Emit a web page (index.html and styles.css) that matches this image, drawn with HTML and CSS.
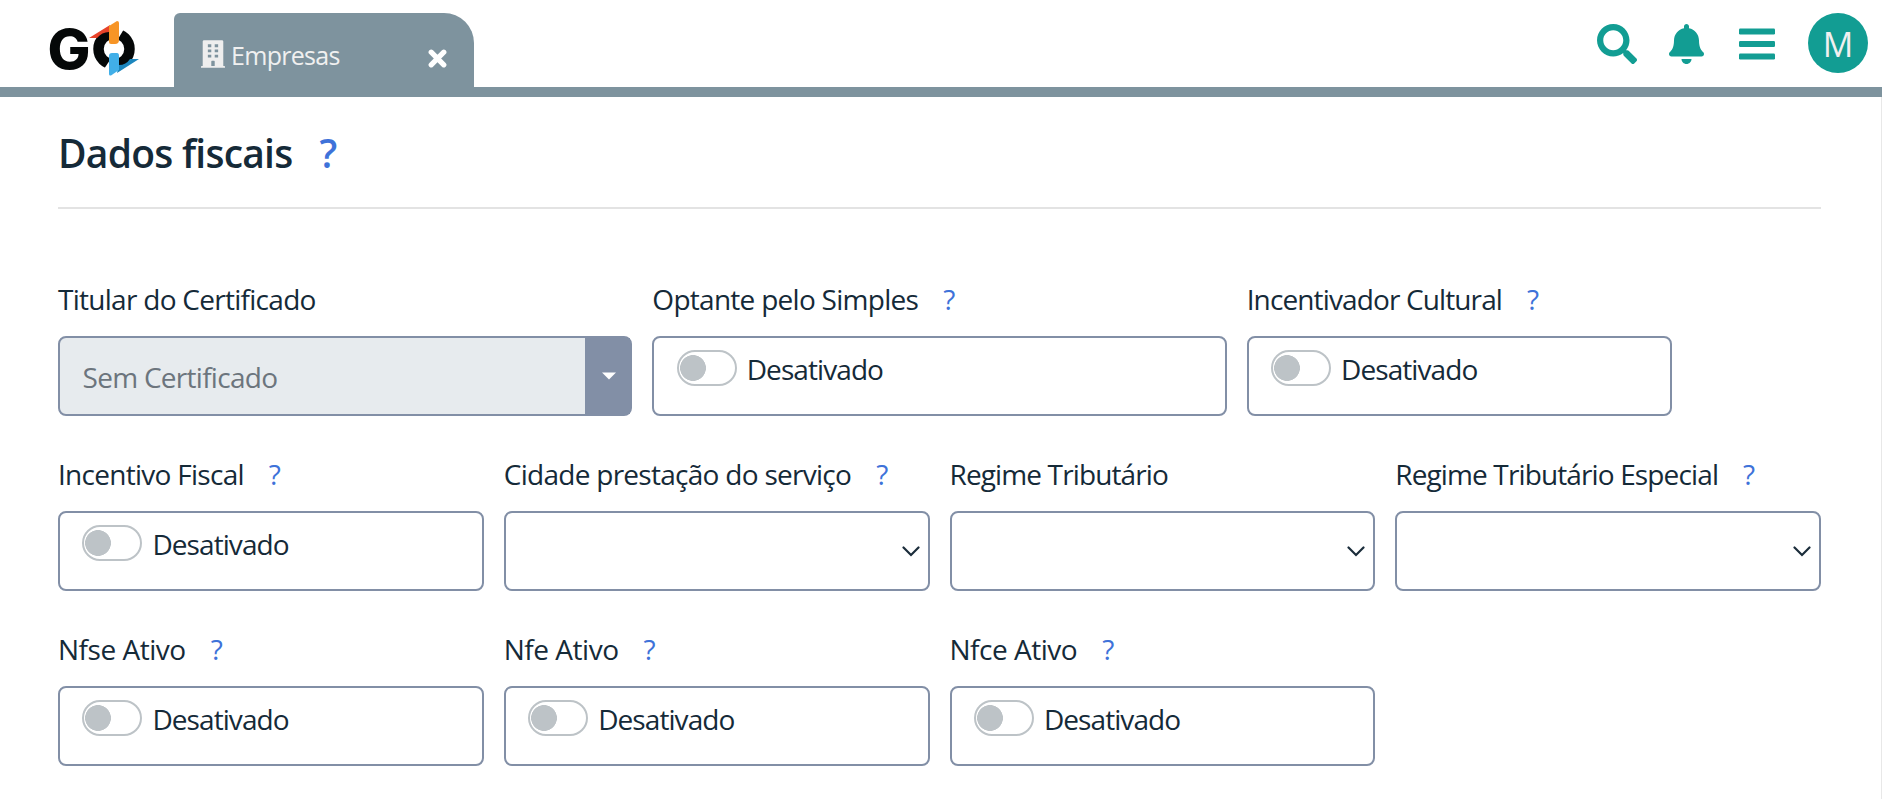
FILE: index.html
```html
<!DOCTYPE html>
<html lang="pt-BR">
<head>
<meta charset="utf-8">
<title>Empresas</title>
<link rel="stylesheet" href="styles.css">
</head>
<body>
<header class="topbar">
  <svg class="logo" width="98" height="76" viewBox="-6 -8 98 76" role="img" aria-label="GO">
    <text class="logo-letter" x="-1.500" y="49" textLength="43" lengthAdjust="spacingAndGlyphs">G</text>
    <ellipse cx="65" cy="29" rx="15.500" ry="15.500" fill="none" stroke="#050808" stroke-width="10.500"/>
    <path d="M69 1 75 9 69 19z" fill="#fff"/>
    <path d="M61 57 55 49 61 40z" fill="#fff"/>
    <path d="M40 18 61 5 60 12Q53 12 48 18z" fill="#e8432a"/>
    <path d="M60 6 68 1Q70 1 70 3V20Q70 24 66 24H62Q60 24 60 22z" fill="#f79526"/>
    <path d="M90 39 68 53 70 45Q77 45 81 39z" fill="#1c86bd"/>
    <path d="M60 36Q60 33 63 33H68Q70 33 70 36V50L62 55.500Q60 56 60 54z" fill="#41afe8"/>
  </svg>
  <div class="tab">
    <svg class="tab-icon" width="24" height="28" viewBox="0 0 448 512" fill="#eee"><path fill-rule="evenodd" d="M436 480h-20V24c0-13-11-24-24-24H56C43 0 32 11 32 24v456H12c-7 0-12 5-12 12v20h448v-20c0-7-5-12-12-12zM128 76h64v52h-64zM128 172h64v52h-64zM128 268h64v52h-64zM256 76h64v52h-64zM256 172h64v52h-64zM256 268h64v52h-64zM192 480v-84c0-7 5-12 12-12h40c7 0 12 5 12 12v84z"/></svg>
    <span class="tab-title">Empresas</span>
    <svg class="tab-close" width="19" height="19" viewBox="0 0 19 19"><path d="M3.200 3.200 15.800 15.800M15.800 3.200 3.200 15.800" stroke="#fff" stroke-width="5.200" stroke-linecap="round"/></svg>
  </div>
  <nav class="actions">
    <svg width="40" height="40" viewBox="0 0 512 512" fill="#129d93"><path d="M505 442.700 405.300 343c-4.500-4.500-10.600-7-17-7H372c27.600-35.300 44-79.700 44-128C416 93.100 322.900 0 208 0S0 93.100 0 208s93.100 208 208 208c48.300 0 92.700-16.400 128-44v16.300c0 6.400 2.500 12.500 7 17l99.700 99.700c9.400 9.400 24.600 9.400 33.900 0l28.300-28.300c9.400-9.400 9.400-24.600.100-34zM208 336c-70.700 0-128-57.200-128-128 0-70.700 57.200-128 128-128 70.700 0 128 57.200 128 128 0 70.700-57.200 128-128 128z"/></svg>
    <svg width="35" height="40" viewBox="0 0 448 512" fill="#129d93"><path d="M224 512c35.300 0 63.900-28.700 63.900-64H160.100c0 35.300 28.600 64 63.900 64zm215.400-149.700c-19.300-20.800-55.500-52-55.500-154.300 0-77.700-54.500-139.900-127.900-155.200V32c0-17.700-14.300-32-32-32s-32 14.300-32 32v20.800C118.600 68.100 64.100 130.300 64.100 208c0 102.300-36.200 133.500-55.500 154.300-6 6.400-8.700 14.200-8.600 21.700.100 16.400 13 32 32.100 32h383.800c19.100 0 32-15.600 32.100-32 .100-7.500-2.600-15.200-8.600-21.700z"/></svg>
    <svg width="36" height="40" viewBox="0 0 36 40" fill="#129d93"><rect y="4.500" width="36" height="6" rx="1.200"/><rect y="17" width="36" height="6" rx="1.200"/><rect y="29.500" width="36" height="6" rx="1.200"/></svg>
    <span class="avatar">M</span>
  </nav>
</header>
<main class="page">
  <h1 class="heading">Dados fiscais<span class="help">?</span></h1>
  <form class="fields">
    <div class="field third">
      <div class="label">Titular do Certificado</div>
      <div class="box combo"><span class="combo-text">Sem Certificado</span><span class="combo-button"><svg width="14" height="8" viewBox="0 0 14 8"><path d="M0 .500H14L7 7.500z" fill="#fff"/></svg></span></div>
    </div>
    <div class="field third">
      <div class="label">Optante pelo Simples<span class="help">?</span></div>
      <div class="box toggle"><span class="switch"></span>Desativado</div>
    </div>
    <div class="field">
      <div class="label tight">Incentivador Cultural<span class="help">?</span></div>
      <div class="box toggle"><span class="switch"></span>Desativado</div>
    </div>
    <div class="field first">
      <div class="label">Incentivo Fiscal<span class="help">?</span></div>
      <div class="box toggle"><span class="switch"></span>Desativado</div>
    </div>
    <div class="field">
      <div class="label">Cidade prestação do serviço<span class="help">?</span></div>
      <div class="box select"><svg width="18" height="11" viewBox="0 0 18 11"><path d="M1.500 1.500 9 9 16.500 1.500" fill="none" stroke="#1b2d3b" stroke-width="2.200" stroke-linecap="round"/></svg></div>
    </div>
    <div class="field">
      <div class="label tight">Regime Tributário</div>
      <div class="box select"><svg width="18" height="11" viewBox="0 0 18 11"><path d="M1.500 1.500 9 9 16.500 1.500" fill="none" stroke="#1b2d3b" stroke-width="2.200" stroke-linecap="round"/></svg></div>
    </div>
    <div class="field">
      <div class="label tight">Regime Tributário Especial<span class="help">?</span></div>
      <div class="box select"><svg width="18" height="11" viewBox="0 0 18 11"><path d="M1.500 1.500 9 9 16.500 1.500" fill="none" stroke="#1b2d3b" stroke-width="2.200" stroke-linecap="round"/></svg></div>
    </div>
    <div class="field first">
      <div class="label loose">Nfse Ativo<span class="help">?</span></div>
      <div class="box toggle"><span class="switch"></span>Desativado</div>
    </div>
    <div class="field">
      <div class="label loose">Nfe Ativo<span class="help">?</span></div>
      <div class="box toggle"><span class="switch"></span>Desativado</div>
    </div>
    <div class="field">
      <div class="label loose">Nfce Ativo<span class="help">?</span></div>
      <div class="box toggle"><span class="switch"></span>Desativado</div>
    </div>
  </form>
</main>
</body>
</html>
```

FILE: styles.css
```css
* { box-sizing: border-box; }

body {
  margin: 0;
  height: 799px;
  overflow: hidden;
  display: flex;
  flex-direction: column;
  background: #fff;
  color: #152a38;
  font-family: "Open Sans", "Noto Sans", sans-serif;
  font-size: 28px;
}

svg { display: block; flex: none; }

.topbar {
  display: flex;
  height: 97px;
  border-bottom: 10px solid #7e939e;
}

.logo { margin: 12px 33px 0 43px; overflow: visible; }

.logo-letter {
  font-family: Inter, sans-serif;
  font-weight: 800;
  font-size: 55px;
  fill: #050808;
}

.tab {
  display: flex;
  align-items: flex-start;
  width: 300px;
  height: 74px;
  margin-top: 13px;
  padding-left: 27px;
  border-radius: 6px 30px 0 0;
  background: #7e939e;
  color: #f0f0f0;
}

.tab-icon { margin-top: 27px; }

.tab-title {
  width: 203px;
  padding: 23px 0 0 6px;
  font-size: 25px;
  line-height: 38px;
  letter-spacing: -0.7px;
}

.tab-close { margin-top: 36px; }

.actions {
  display: flex;
  margin: 24px 14px 0 auto;
}

.actions svg:nth-child(1) { margin-right: 32px; }
.actions svg:nth-child(2) { margin-right: 35px; }
.actions svg:nth-child(3) { margin-right: 33px; }

.avatar {
  width: 60px;
  height: 60px;
  margin-top: -11px;
  border-radius: 50%;
  background: #129d93;
  color: #f0f0f0;
  font-size: 34px;
  line-height: 62px;
  text-align: center;
}

.page {
  flex: 1;
  padding: 0 60px 0 58px;
  border-right: 1px solid #e8e8e8;
}

.heading {
  height: 112px;
  margin: 0 0 70px;
  padding-top: 28px;
  border-bottom: 2px solid #e3e3e3;
  font-size: 39px;
  font-weight: 600;
  line-height: 56px;
  letter-spacing: -0.75px;
}

.help {
  margin-left: 25px;
  color: #3e72d9;
}

.heading .help { margin-left: 27px; }

.fields {
  display: grid;
  grid-template-columns: repeat(12, 1fr);
  column-gap: 20px;
  row-gap: 38px;
}

.field { grid-column: span 3; min-width: 0; }
.field.third { grid-column: span 4; }
.field.first { grid-column: 1 / span 3; }

.label {
  height: 40px;
  margin-bottom: 17px;
  line-height: 40px;
  letter-spacing: -0.72px;
  white-space: nowrap;
}

.label.tight { letter-spacing: -0.87px; }
.label.loose { letter-spacing: -0.48px; }

.box {
  display: flex;
  height: 80px;
  border: 2px solid #828fa6;
  border-radius: 8px;
}

.toggle {
  align-items: flex-start;
  padding: 12px 0 0 22.4px;
  line-height: 38px;
  letter-spacing: -0.92px;
}

.switch {
  width: 60px;
  height: 36px;
  margin-right: 10px;
  border: 2px solid #bdc3c7;
  border-radius: 18px;
  background: radial-gradient(circle at 14px 16px, #bdc3c7 12.6px, transparent 13.2px);
}

.combo {
  background: #e7ebee;
  color: #6c757d;
}

.combo-text {
  flex: 1;
  padding-left: 22.5px;
  line-height: 78px;
  letter-spacing: -0.72px;
}

.combo-button {
  display: flex;
  align-items: center;
  justify-content: center;
  width: 45px;
  padding-left: 2px;
  background: #828fa6;
}

.select {
  align-items: center;
  justify-content: flex-end;
  padding-right: 8px;
}
```
